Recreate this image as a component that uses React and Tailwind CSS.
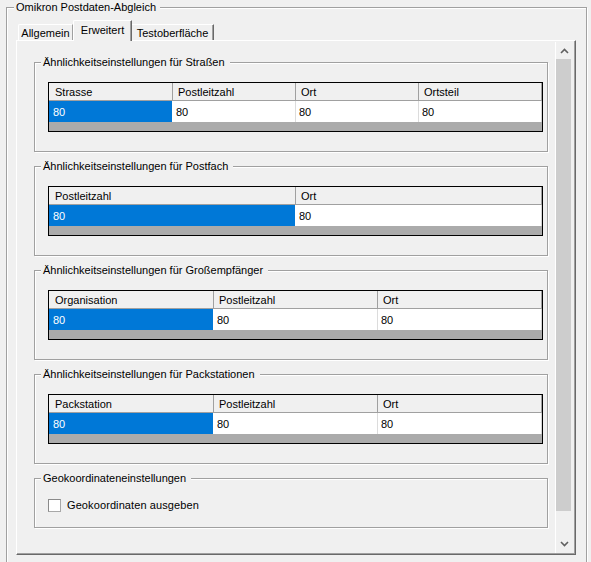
import React from "react";

const tables = [
  {
    title: "Ähnlichkeitseinstellungen für Straßen",
    cols: [
      { name: "Strasse", w: "w-[124px]" },
      { name: "Postleitzahl", w: "w-[123px]" },
      { name: "Ort", w: "w-[123px]" },
      { name: "Ortsteil", w: "w-[123px]" },
    ],
  },
  {
    title: "Ähnlichkeitseinstellungen für Postfach",
    cols: [
      { name: "Postleitzahl", w: "w-[247px]" },
      { name: "Ort", w: "w-[246px]" },
    ],
  },
  {
    title: "Ähnlichkeitseinstellungen für Großempfänger",
    cols: [
      { name: "Organisation", w: "w-[165px]" },
      { name: "Postleitzahl", w: "w-[164px]" },
      { name: "Ort", w: "w-[164px]" },
    ],
  },
  {
    title: "Ähnlichkeitseinstellungen für Packstationen",
    cols: [
      { name: "Packstation", w: "w-[165px]" },
      { name: "Postleitzahl", w: "w-[164px]" },
      { name: "Ort", w: "w-[164px]" },
    ],
  },
];

function GroupTitle({ children }) {
  return (
    <span className="absolute left-[6px] top-[-8px] bg-[#f0f0f0] pl-[2px] pr-[5px] leading-[14px] whitespace-nowrap">
      {children}
    </span>
  );
}

function Grid({ cols }) {
  return (
    <div className="w-[495px] h-[50px] border border-black bg-[#ababab] flex flex-col">
      <div className="flex h-[18px] bg-[#f0f0f0] border-b border-[#a0a0a0]">
        {cols.map((c, i) => (
          <div
            key={c.name}
            className={`${c.w} h-[17px] border-r border-[#a0a0a0] pt-[1px] leading-[17px] whitespace-nowrap ${
              i === 0 ? "pl-[6px]" : "pl-[5px]"
            }`}
          >
            {c.name}
          </div>
        ))}
      </div>
      <div className="flex h-[21px] bg-white">
        {cols.map((c, i) => (
          <div
            key={c.name}
            className={`${c.w} h-[21px] leading-[22px] border-r ${
              i === 0
                ? "bg-[#0078d7] text-white pl-[4px] border-white"
                : i === cols.length - 1
                ? "pl-[3px] border-[#d4d4d4]"
                : "pl-[3px] border-[#dcdcdc]"
            }`}
          >
            80
          </div>
        ))}
      </div>
    </div>
  );
}

function Chevron({ up }) {
  return (
    <svg width="9" height="6" viewBox="0 0 9 6">
      <polyline
        points={up ? "1,5 4.5,1.5 8,5" : "1,1 4.5,4.5 8,1"}
        fill="none"
        stroke="#606060"
        strokeWidth="1.6"
      />
    </svg>
  );
}

export default function App() {
  return (
    <div className="w-[591px] h-[562px] overflow-hidden bg-[#f0f0f0] text-black text-[11px] font-['Liberation_Sans',Arial,sans-serif]">
      <div className="relative ml-[6px] mt-[7px] w-[581px] h-[570px] border border-[#a0a0a0] shadow-[inset_1px_1px_0_#fff,1px_1px_0_#fff]">
        <span className="absolute left-[7px] top-[-8px] bg-[#f0f0f0] pl-[2px] pr-[4px] leading-[14px] whitespace-nowrap">
          Omikron Postdaten-Abgleich
        </span>
        <div className="pt-[12px] pl-[9px]">
          {/* tabs */}
          <div className="relative z-10 flex items-end h-[20px] pl-[2px]">
            <div className="w-[55px] h-[16px] border-l border-t border-white border-r border-r-[#a0a0a0] rounded-tl-[2px] flex items-center justify-center leading-[14px]">
              Allgemein
            </div>
            <div className="w-[59px] h-[21px] -mb-[1px] bg-[#f0f0f0] border-l border-t border-white border-r border-r-[#696969] shadow-[inset_-1px_0_0_#a0a0a0] rounded-tl-[2px] flex items-start justify-center pt-[2px] leading-[14px]">
              Erweitert
            </div>
            <div className="w-[82px] h-[16px] border-t border-white border-r border-r-[#696969] shadow-[inset_-1px_0_0_#a0a0a0] flex items-center justify-center leading-[14px]">
              Testoberfläche
            </div>
          </div>
          {/* tab page */}
          <div className="w-[560px] h-[515px] border-l border-t border-white border-r border-b border-r-[#696969] border-b-[#696969] shadow-[inset_-1px_-1px_0_#a0a0a0] flex">
            <div className="w-[538px] h-[512px] overflow-hidden pl-[17px] pt-[21px]">
              <div className="flex flex-col gap-[14px]">
                {tables.map((t) => (
                  <div
                    key={t.title}
                    className="relative w-[514px] h-[90px] border border-[#a0a0a0] shadow-[inset_1px_1px_0_#fff,1px_1px_0_#fff] pt-[19px] pl-[13px]"
                  >
                    <GroupTitle>{t.title}</GroupTitle>
                    <Grid cols={t.cols} />
                  </div>
                ))}
                <div className="relative w-[514px] h-[50px] border border-[#a0a0a0] shadow-[inset_1px_1px_0_#fff,1px_1px_0_#fff] pt-[19px] pl-[13px]">
                  <GroupTitle>Geokoordinateneinstellungen</GroupTitle>
                  <div className="flex items-center gap-[6px]">
                    <div className="w-[13px] h-[13px] bg-white border border-[#a8a8a8] border-t-[#8a8a8a] border-l-[#8a8a8a]" />
                    <span className="leading-[14px] tracking-[0.1px]">Geokoordinaten ausgeben</span>
                  </div>
                </div>
              </div>
            </div>
            {/* scrollbar */}
            <div className="w-[17px] h-[511px] mt-[1px] bg-[#f0f0f0] border-l border-white flex flex-col">
              <div className="h-[17px] flex items-center justify-center pt-[1px]">
                <Chevron up />
              </div>
              <div className="flex-1">
                <div className="w-[15px] h-[452px] bg-[#cdcdcd]" />
              </div>
              <div className="h-[17px] flex items-center justify-center pb-[1px]">
                <Chevron />
              </div>
            </div>
          </div>
        </div>
      </div>
    </div>
  );
}
